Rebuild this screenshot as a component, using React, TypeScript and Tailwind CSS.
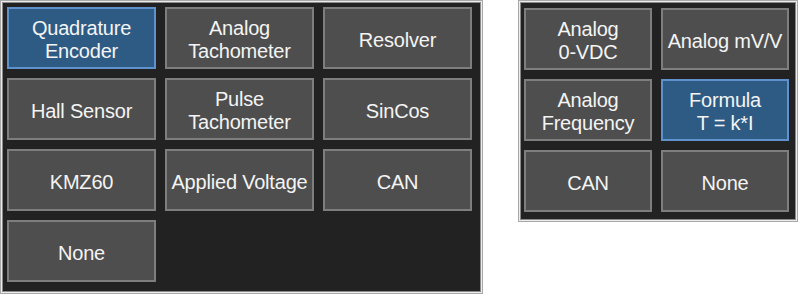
import React from "react";

type Btn = { label: string[]; active?: boolean };

const leftButtons: Btn[] = [
  { label: ["Quadrature", "Encoder"], active: true },
  { label: ["Analog", "Tachometer"] },
  { label: ["Resolver"] },
  { label: ["Hall Sensor"] },
  { label: ["Pulse", "Tachometer"] },
  { label: ["SinCos"] },
  { label: ["KMZ60"] },
  { label: ["Applied Voltage"] },
  { label: ["CAN"] },
  { label: ["None"] },
];

const rightButtons: Btn[] = [
  { label: ["Analog", "0-VDC"] },
  { label: ["Analog mV/V"] },
  { label: ["Analog", "Frequency"] },
  { label: ["Formula", "T = k*I"], active: true },
  { label: ["CAN"] },
  { label: ["None"] },
];

function OptionButton({ label, active }: Btn) {
  return (
    <button
      type="button"
      className={`h-[62px] flex flex-col items-center justify-center border-2 pt-[4px] text-[20px] leading-[23px] tracking-[-0.2px] text-[#f4f4f4] ${
        active ? "bg-[#2e5b84] border-[#5f92cc]" : "bg-[#4e4e4e] border-[#7e7e7e]"
      }`}
    >
      {label.map((line) => (
        <span key={line} className="whitespace-nowrap">
          {line}
        </span>
      ))}
    </button>
  );
}

export default function App() {
  return (
    <div
      className="w-[800px] h-[296px] bg-white flex items-start"
      style={{ fontFamily: '"Liberation Sans", Arial, sans-serif' }}
    >
      {/* Left panel — feedback type */}
      <div className="w-[483px] h-[294px] border border-[#a8a8a8] bg-[#ececec] p-[1px]">
        <div className="h-full border border-[#8a8a8a] bg-[#222222] pl-[4px] pt-[4px]">
          <div className="grid grid-cols-[repeat(3,149px)] gap-x-[9px] gap-y-[9px]">
            {leftButtons.map((b, i) => (
              <OptionButton key={i} {...b} />
            ))}
          </div>
        </div>
      </div>

      {/* Right panel — torque input */}
      <div className="ml-[35px] w-[280px] h-[222px] border border-[#a8a8a8] bg-[#ececec] p-[1px]">
        <div className="h-full border border-[#8a8a8a] bg-[#222222] pl-[3px] pt-[5px]">
          <div className="grid grid-cols-[repeat(2,128px)] gap-x-[9px] gap-y-[9px]">
            {rightButtons.map((b, i) => (
              <OptionButton key={i} {...b} />
            ))}
          </div>
        </div>
      </div>
    </div>
  );
}
